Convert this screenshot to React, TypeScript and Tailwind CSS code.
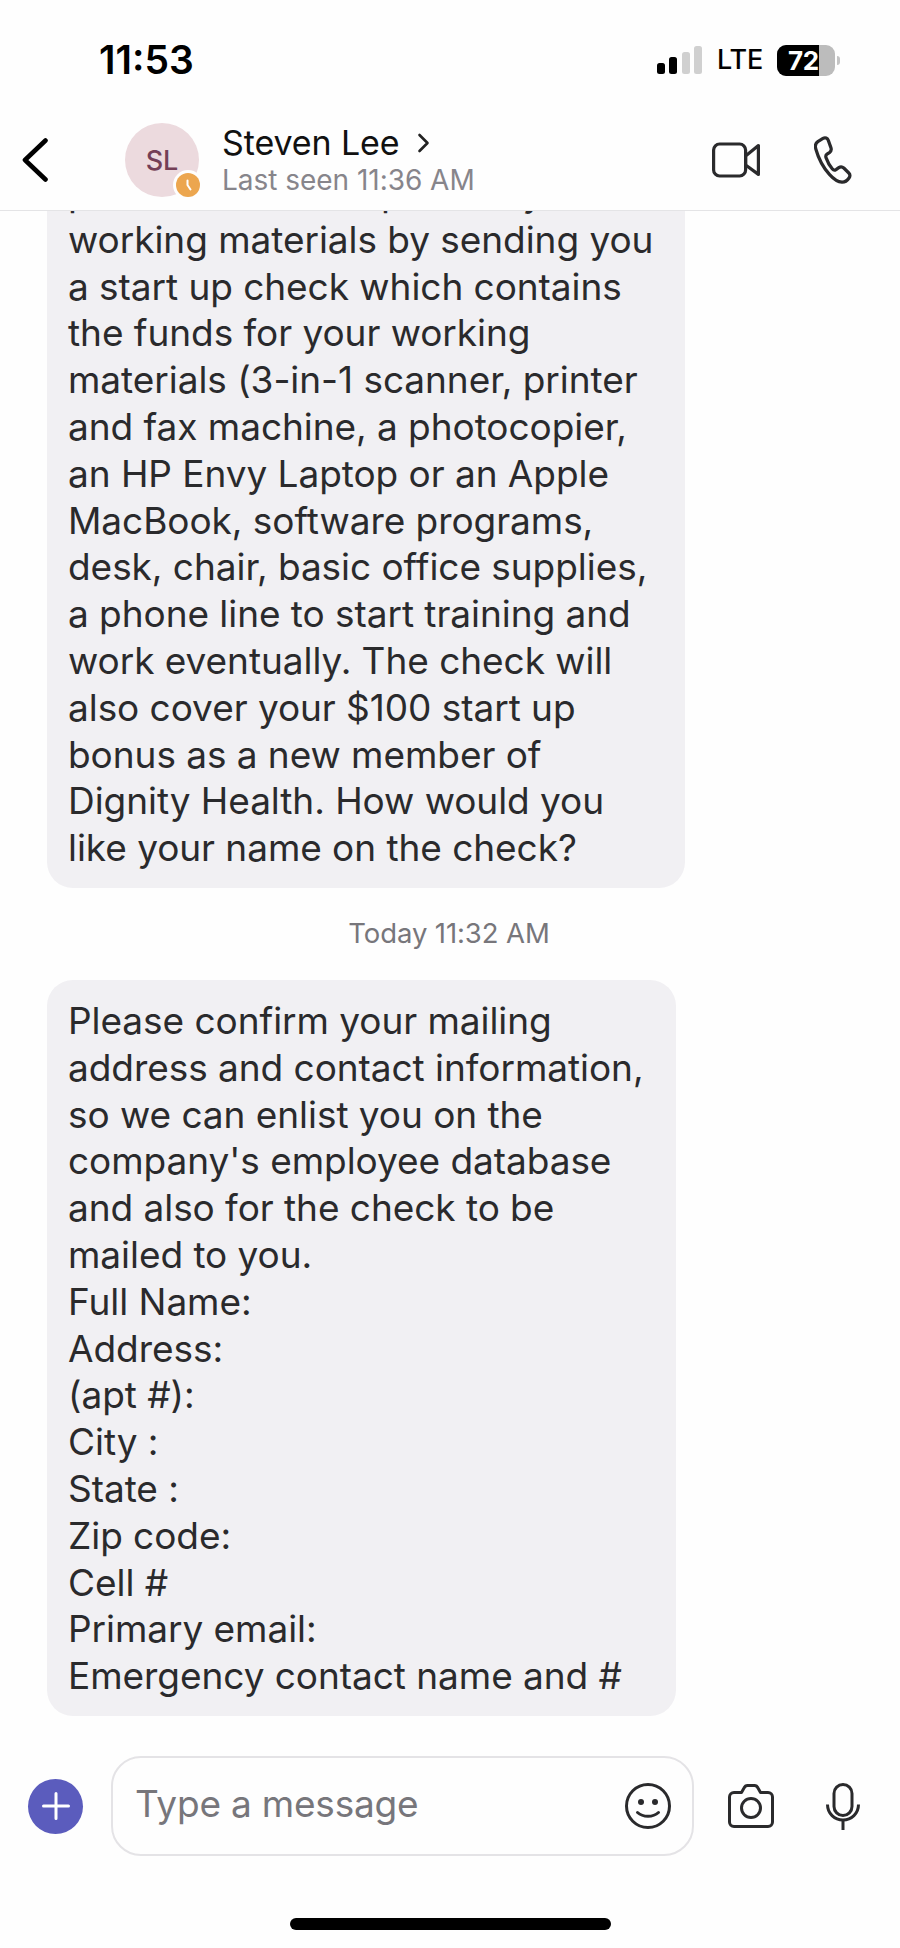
const font = { fontFamily: 'Inter, "Liberation Sans", sans-serif' };

const first = [
  "process and then provide you",
  "working materials by sending you",
  "a start up check which contains",
  "the funds for your working",
  "materials (3-in-1 scanner, printer",
  "and fax machine, a photocopier,",
  "an HP Envy Laptop or an Apple",
  "MacBook, software programs,",
  "desk, chair, basic office supplies,",
  "a phone line to start training and",
  "work eventually. The check will",
  "also cover your $100 start up",
  "bonus as a new member of",
  "Dignity Health. How would you",
  "like your name on the check?",
];

const second = [
  "Please confirm your mailing",
  "address and contact information,",
  "so we can enlist you on the",
  "company's employee database",
  "and also for the check to be",
  "mailed to you.",
  "Full Name:",
  "Address:",
  "(apt #):",
  "City :",
  "State :",
  "Zip code:",
  "Cell #",
  "Primary email:",
  "Emergency contact name and #",
];

function Bubble({ lines, width }: { lines: string[]; width: string }) {
  return (
    <div className={`${width} shrink-0 rounded-[26px] bg-[#f1f0f3] pl-[21px] pt-[18px] pb-[16px] text-[37px] leading-[46.8px] tracking-[-0.05px] text-[#2a2a2c]`}>
      {lines.map((l) => (
        <div key={l} className="whitespace-nowrap">
          {l}
        </div>
      ))}
    </div>
  );
}

export default function App() {
  return (
    <div className="flex h-[1948px] w-[900px] flex-col overflow-hidden bg-[#fefefe]" style={font}>
      {/* status bar */}
      <div className="flex h-[110px] shrink-0 items-start justify-between pt-[38px] pl-[99px] pr-[60px]">
        <span className="text-[39px] font-semibold leading-[44px] tracking-[0px] text-black">11:53</span>
        <div className="flex items-center pt-[4px]">
          <svg width="46" height="30" viewBox="0 0 46 30" className="mr-[14px]">
            <rect x="0" y="18" width="8" height="11" rx="2.5" fill="#000" />
            <rect x="12" y="12" width="8" height="17" rx="2.5" fill="#000" />
            <rect x="25" y="7" width="8" height="22" rx="2.5" fill="#d0d0d0" />
            <rect x="37" y="1" width="8" height="28" rx="2.5" fill="#d0d0d0" />
          </svg>
          <span className="mr-[14px] text-[27px] font-medium leading-[36px] tracking-[-0.2px] text-black">LTE</span>
          <div className="relative flex h-[31px] w-[58px] items-center overflow-hidden rounded-[9px] bg-[#bcbcbc]">
            <div className="absolute inset-y-0 left-0 w-[42px] bg-black" />
            <span className="relative ml-[11px] text-[26px] font-bold leading-[31px] tracking-[-0.3px] text-white">72</span>
          </div>
          <div className="ml-[2px] h-[9px] w-[3px] rounded-r-full bg-[#c4c4c4]" />
        </div>
      </div>

      {/* header */}
      <div className="relative z-10 flex h-[101px] shrink-0 items-center border-b border-[#e4e4e6] bg-[#fefefe] pl-[22px]">
        <svg width="26" height="44" viewBox="0 0 26 44" fill="none" stroke="#000" strokeWidth="4.6" strokeLinecap="round" strokeLinejoin="round">
          <path d="M23.500 2.500 3 22l20.500 19.500" />
        </svg>
        <div className="relative ml-[77px] flex h-[74px] w-[74px] shrink-0 items-center justify-center rounded-full bg-[#ecdade]">
          <span className="text-[27px] font-medium leading-none text-[#743f56]">SL</span>
          <div className="absolute bottom-[-3px] right-[-4px] flex h-[30px] w-[30px] items-center justify-center rounded-full bg-[#fefefe]">
            <svg width="24" height="24" viewBox="0 0 24 24">
              <circle cx="12" cy="12" r="12" fill="#eca64f" />
              <path d="M11.500 7.500v4.500l3 4.500" fill="none" stroke="#fff" strokeWidth="2" strokeLinecap="round" strokeLinejoin="round" />
            </svg>
          </div>
        </div>
        <div className="ml-[23px] flex flex-col">
          <div className="flex items-center">
            <span className="text-[34px] font-normal leading-[38px] tracking-[-0.1px] text-[#111]">Steven Lee</span>
            <svg width="14" height="22" viewBox="0 0 14 22" fill="none" stroke="#222" strokeWidth="2.6" strokeLinecap="round" strokeLinejoin="round" className="ml-[17px]">
              <path d="M2.500 3 10.500 11l-8 8" />
            </svg>
          </div>
          <span className="pt-[1px] text-[28px] leading-[34px] tracking-[-0.03px] text-[#87858b]">Last seen 11:36 AM</span>
        </div>
        <svg width="48" height="36" viewBox="0 0 48 36" fill="none" stroke="#2a2a2c" strokeWidth="3.2" strokeLinejoin="round" className="ml-auto">
          <rect x="1.600" y="2" width="32" height="32" rx="6" />
          <path d="M33.600 14 46.400 3.600v28.800L33.600 23z" />
        </svg>
        <svg width="38" height="48" viewBox="0 0 38 48" fill="none" stroke="#2a2a2c" strokeWidth="3.2" strokeLinejoin="round" className="ml-[54px] mr-[48px]">
          <path d="M9 2.400 3.800 5.600C1.400 7.200 1 10 1.800 13c2.400 8.600 7 18 13.600 25.400 3.400 3.800 8 7.600 12.600 7.800 3 .1 5.400-1.800 7-4.200 1.200-1.800 1.200-3.600-.2-5l-5-5c-1.600-1.500-3.400-1.500-5-.4l-2.800 2c-1.400.9-2.600.6-3.600-.6-2.600-3-5-7.400-6.400-11.400-.5-1.500-.2-2.600 1-3.400l2.400-1.600c1.700-1.200 2.200-3 1.500-5L14.400 4.600C13.500 2 11.200 1.100 9 2.400z" />
        </svg>
      </div>

      {/* messages */}
      <div className="flex min-h-0 flex-1 flex-col justify-end overflow-hidden pl-[47px]">
        <Bubble lines={first} width="w-[638px]" />
        <div className="flex h-[92px] w-[804px] shrink-0 items-center justify-center text-[27.500px] tracking-[-0.1px] text-[#77767b]">
          Today 11:32 AM
        </div>
        <Bubble lines={second} width="w-[629px]" />
      </div>

      {/* composer */}
      <div className="flex shrink-0 flex-col pt-[40px]">
        <div className="flex h-[100px] items-center pl-[28px]">
          <div className="flex h-[55px] w-[55px] shrink-0 items-center justify-center rounded-full bg-[#5b5cbd]">
            <svg width="28" height="28" viewBox="0 0 28 28" stroke="#fff" strokeWidth="3" strokeLinecap="round">
              <path d="M14 1.500v25M1.500 14h25" />
            </svg>
          </div>
          <div className="ml-[28px] flex h-[100px] w-[583px] shrink-0 items-center justify-between rounded-[30px] border-2 border-[#e4e3e6] pl-[22px] pr-[21px]">
            <span className="pb-[5px] text-[37px] tracking-[-0.2px] text-[#77767b]">Type a message</span>
            <svg width="46" height="46" viewBox="0 0 46 46" fill="none" stroke="#2a2a2c" strokeWidth="3" strokeLinecap="round">
              <circle cx="23" cy="23" r="21.500" />
              <circle cx="16" cy="19" r="3" fill="#2a2a2c" stroke="none" />
              <circle cx="30" cy="19" r="3" fill="#2a2a2c" stroke="none" />
              <path d="M12.500 29.500c5.500 5 15.500 5 21 0" />
            </svg>
          </div>
          <svg width="46" height="44" viewBox="0 0 46 44" fill="none" stroke="#2a2a2c" strokeWidth="3" strokeLinejoin="round" className="ml-[34px] shrink-0">
            <path d="M6 8.500h7.500l2.500-4.500c.7-1.500 2-2.500 3.500-2.500h7c1.500 0 2.800 1 3.500 2.500l2.500 4.500H40c2.500 0 4.500 2 4.500 4.500v25c0 2.500-2 4.500-4.500 4.500H6c-2.500 0-4.500-2-4.500-4.500v-25c0-2.500 2-4.500 4.500-4.500z" />
            <circle cx="23" cy="24" r="9.500" />
          </svg>
          <svg width="34" height="47" viewBox="0 0 34 47" fill="none" stroke="#2a2a2c" strokeWidth="3" strokeLinecap="butt" className="ml-[52px] shrink-0">
            <rect x="8" y="1.500" width="18" height="31" rx="9" />
            <path d="M1.500 21.500c0 9 7 15.500 15.500 15.500s15.500-6.500 15.500-15.500" />
            <path d="M17 37v10" />
          </svg>
        </div>
        <div className="mt-[62px] ml-[290px] h-[12px] w-[321px] rounded-full bg-black" />
        <div className="h-[18px]" />
      </div>
    </div>
  );
}
